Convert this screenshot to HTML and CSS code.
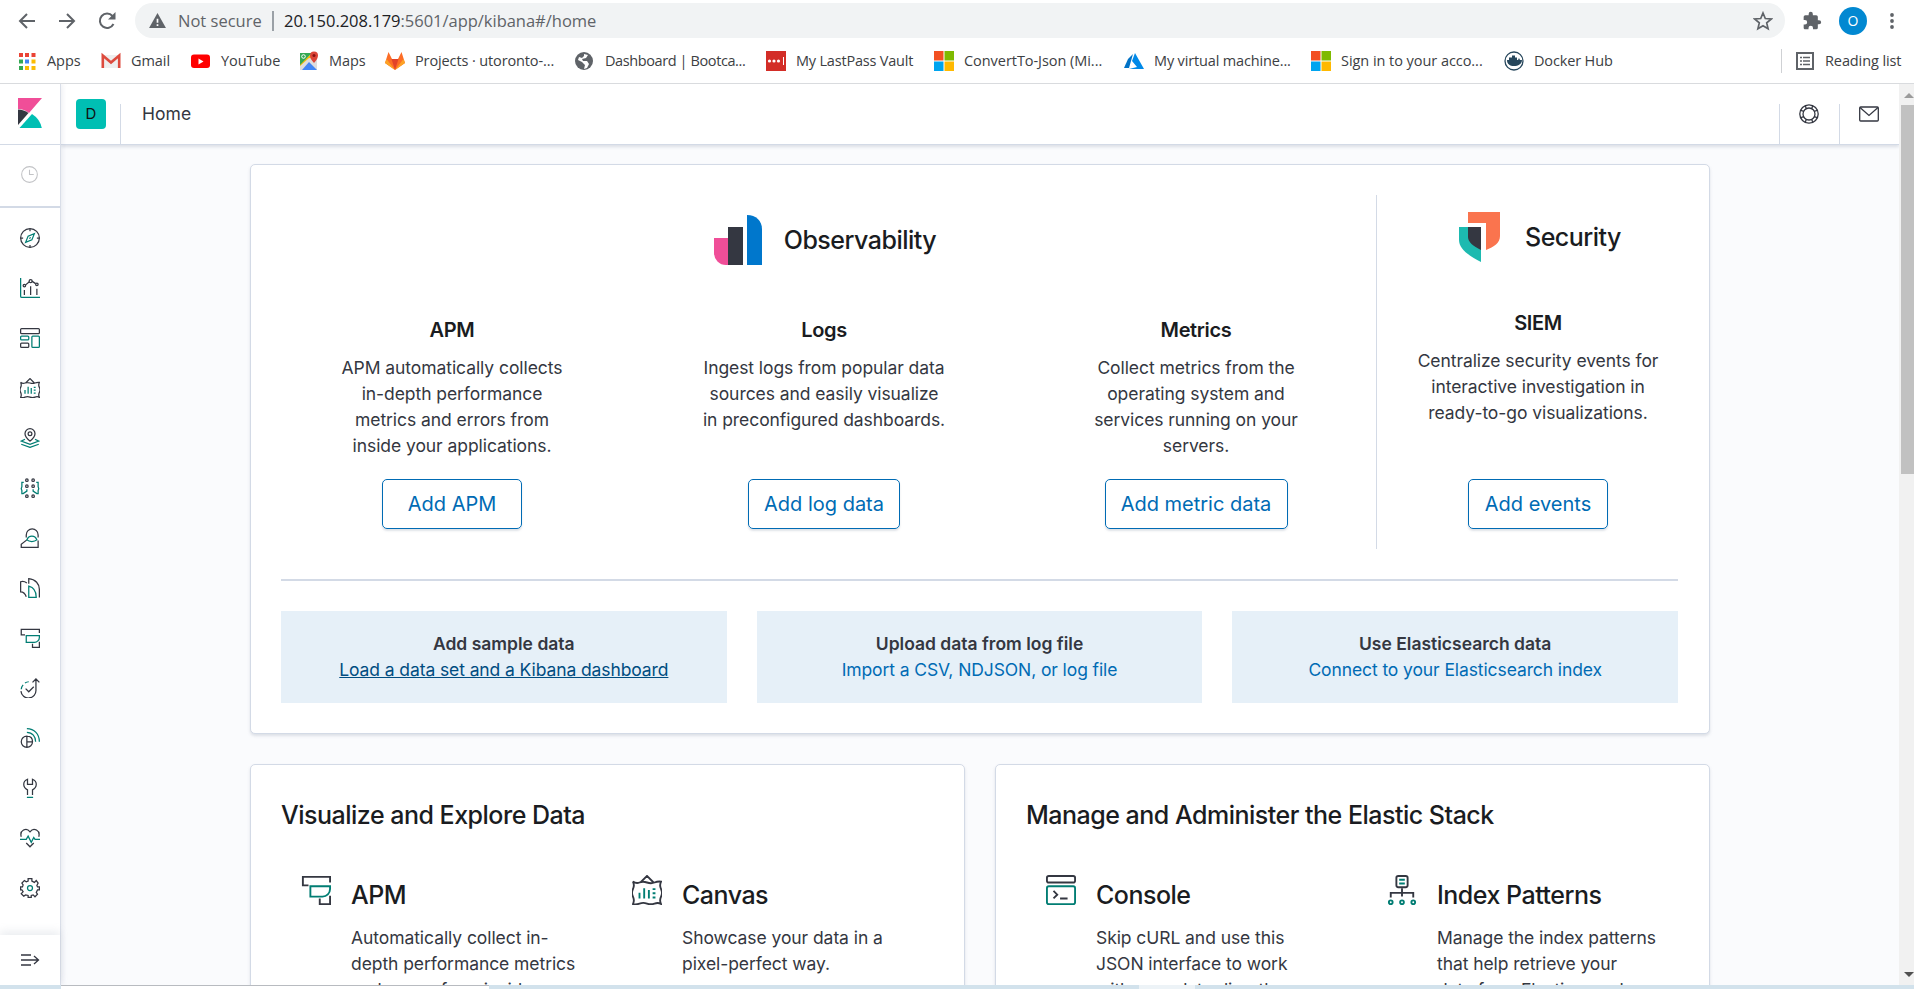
FILE: index.html
```html
<!DOCTYPE html>
<html lang="en">
<head>
<meta charset="utf-8">
<title>Home - Kibana</title>
<link rel="stylesheet" href="styles.css">
</head>
<body>
<svg width="0" height="0" class="defs" aria-hidden="true">
  <symbol id="i-clock" viewBox="0 0 16 16"><g fill="none" stroke="currentColor"><circle cx="8" cy="8" r="7.4"/><path d="M8 3.5V8h4"/></g></symbol>
  <symbol id="i-compass" viewBox="0 0 32 32"><g fill="none" stroke="currentColor" stroke-width="2"><circle cx="16" cy="16" r="15"/><path d="M16 1v4M16 27v4M1 16h4M27 16h4"/><path class="accent" d="M23 9l-4 10-10 4 4-10zM15 17l2-2"/></g></symbol>
  <symbol id="i-visualize" viewBox="0 0 32 32"><g fill="none" stroke="currentColor" stroke-width="2"><path class="accent" d="M1 0v29a2 2 0 0 0 2 2h29"/><path d="M7 19v8M17 13v14M27 17v10M9 11l6-5M19 5l6 4"/><circle cx="7" cy="12" r="2"/><circle cx="17" cy="5" r="2.4"/><circle cx="27" cy="10" r="2"/></g></symbol>
  <symbol id="i-dashboard" viewBox="0 0 32 32"><g fill="none" stroke="currentColor" stroke-width="2"><rect x="1" y="1" width="30" height="8" rx="1.5"/><rect class="accent" x="1" y="13" width="13" height="6" rx="1.5"/><rect x="1" y="24" width="13" height="7" rx="1.5"/><rect class="accent" x="19" y="13" width="12" height="18" rx="1.5"/></g></symbol>
  <symbol id="i-canvas" viewBox="0 0 32 32"><g fill="none" stroke="currentColor" stroke-width="2"><path d="M9 8l7-7 7 7M1 7q3.500 2.500 7 1t8 0 8 0 7-1q-2 4 0 8t0 8 0 8q-3-2-7-.5t-8 0-8 0-7 .5q2-4 0-8t0-8 0-8z"/><path class="accent" d="M8 19v6M13 14v11M18 16v9M22 15h3M22 19.500h3M22 24h3"/></g></symbol>
  <symbol id="i-maps" viewBox="0 0 32 32"><g fill="none" stroke="currentColor" stroke-width="2"><path d="M16 21s-8-7-8-12a8 8 0 0 1 16 0c0 5-8 12-8 12z"/><circle cx="16" cy="9" r="3"/><path class="accent" d="M8 18l-6 3 14 5 14-5-6-3M2 26l14 5 14-5"/></g></symbol>
  <symbol id="i-ml" viewBox="0 0 32 32"><g fill="none" stroke="currentColor" stroke-width="2"><circle cx="11" cy="3.500" r="2"/><circle cx="21" cy="3.500" r="2"/><circle cx="11" cy="13" r="2"/><circle cx="21" cy="13" r="2"/><circle cx="11" cy="29" r="2"/><circle cx="21" cy="29" r="2"/><path class="accent" d="M6 7H3v7l-1 3 1 3v5h2l6-4v-3M26 7h3v7l1 3-1 3v5h-2l-6-4v-3"/></g></symbol>
  <symbol id="i-graph" viewBox="0 0 32 32"><g fill="none" stroke="currentColor" stroke-width="2"><path d="M10 15V11a9.500 9.500 0 0 1 19 0v4M11 19l-9 7v5h27V20"/><path class="accent" d="M11 19c3-8 13-8 16 0-4 3.500-12 3.500-16 0z"/></g></symbol>
  <symbol id="i-metrics" viewBox="0 0 32 32"><g fill="none" stroke="currentColor" stroke-width="2"><path d="M11 8C7 5 4 5 1 6v16c4 0 7 2 9 8M14 9V1c11 1 17 9 17 17v13"/><path class="accent" d="M14 13c8 2 12 9 12 18H14z"/></g></symbol>
  <symbol id="i-apm" viewBox="0 0 32 32"><g fill="none" stroke="currentColor" stroke-width="2"><path d="M8 11H2V2h29v6M20 25v6h11V22"/><path class="accent" d="M10 12h21v3a8 8 0 0 1-8 8H10z"/></g></symbol>
  <symbol id="i-uptime" viewBox="0 0 32 32"><g fill="none" stroke="currentColor" stroke-width="2"><path d="M20 7l5.500-5.500L31 7M25.500 2v17a12 12 0 0 1-24 2M9 17l5 5 8-8"/><path class="accent" d="M2 18a12 12 0 0 1 3-7M8 8a12 12 0 0 1 6-2"/></g></symbol>
  <symbol id="i-siem" viewBox="0 0 32 32"><g fill="none" stroke="currentColor" stroke-width="2"><path d="M11 13a9 9 0 1 0 9 9h-9zM11 13v18M11 13c6 0 9 4 9 9"/><path class="accent" d="M11 1c12 0 20 9 20 21M11 7c9 0 14 7 14 15"/></g></symbol>
  <symbol id="i-wrench" viewBox="0 0 32 32"><g fill="none" stroke="currentColor" stroke-width="2"><path d="M12 27v-8c-8-4-8-14 0-17v8h8V2c8 3 8 13 0 17v8"/><path class="accent" d="M11 31h10"/></g></symbol>
  <symbol id="i-heart" viewBox="0 0 32 32"><g fill="none" stroke="currentColor" stroke-width="2"><path d="M2 14C-1 4 10-2 16 6c6-8 17-2 14 8M10 24l6 6 6-6"/><path class="accent" d="M0 18h10l3-5 5 10 4-8 2 3h8"/></g></symbol>
  <symbol id="i-gear" viewBox="0 0 32 32"><g fill="none" stroke="currentColor" stroke-width="2"><path d="M13 1h6v4l4 2 3-3 3 4-2 4 1 2h3v5h-3l-2 4 2 3-4 4-3-3-3 1v3h-5v-3l-4-1-3 2-4-4 3-3-2-3H1v-5h3l1-3-2-3 4-4 3 2 3-1z"/><circle class="accent" cx="16" cy="16" r="4"/></g></symbol>
  <symbol id="i-console" viewBox="0 0 32 32"><g fill="none" stroke="currentColor" stroke-width="2"><rect x="1" y="1" width="30" height="7" rx="2"/><rect class="accent" x="1" y="12" width="30" height="19" rx="2"/><path d="M8 17l4 4-4 4M15 25h8"/></g></symbol>
  <symbol id="i-index" viewBox="0 0 32 32"><g fill="none" stroke="currentColor" stroke-width="2"><rect x="10" y="1" width="12" height="12" rx="2"/><path d="M16 14v9M4 24v-5h24v5"/><g class="accent"><path d="M13 5h6M13 9h6"/><circle cx="4" cy="29" r="2"/><circle cx="16" cy="29" r="2"/><circle cx="28" cy="29" r="2"/></g></g></symbol>
  <symbol id="i-windows" viewBox="0 0 20 20"><path fill="#f25022" d="M0 0h9.500v9.500H0z"/><path fill="#7fba00" d="M10.500 0H20v9.500h-9.500z"/><path fill="#00a4ef" d="M0 10.500h9.500V20H0z"/><path fill="#ffb900" d="M10.500 10.500H20V20h-9.500z"/></symbol>
</svg>

<header class="browser">
  <div class="toolbar">
    <svg class="tool" viewBox="0 0 20 20"><path d="M18 10H3M10 3l-7 7 7 7"/></svg>
    <svg class="tool" viewBox="0 0 20 20"><path d="M2 10h15M10 3l7 7-7 7"/></svg>
    <svg class="tool" viewBox="0 0 20 20"><path d="M16.500 13A7.200 7.200 0 1 1 15.500 5"/><path class="solid" d="M18.500 1v7.500H11z"/></svg>
    <div class="omnibox">
      <svg class="warn" viewBox="0 0 18 16"><path fill="#5f6368" d="M9 0l9 16H0z"/><path stroke="#fff" stroke-width="1.800" d="M9 6v4.500M9 12v1.800"/></svg>
      <span class="muted">Not secure</span><span class="bar"></span>
      <span class="url"><b>20.150.208.179</b>:5601/app/kibana#/home</span>
      <svg class="star" viewBox="0 0 20 20"><path fill="none" stroke="#5f6368" stroke-width="1.700" d="M10 2l2.300 5.500 6 .5-4.600 3.900 1.400 5.900L10 14.700l-5.100 3.100 1.400-5.900L1.700 8l6-.5z"/></svg>
    </div>
    <svg class="puzzle" viewBox="0 0 24 24"><path fill="#5f6368" d="M20.500 11H19V7a2 2 0 0 0-2-2h-4V3.500a2.500 2.500 0 0 0-5 0V5H4a2 2 0 0 0-2 2v3.800h1.500a2.700 2.700 0 0 1 0 5.400H2V20c0 1.100.9 2 2 2h3.800v-1.500a2.700 2.700 0 0 1 5.400 0V22H17a2 2 0 0 0 2-2v-4h1.500a2.500 2.500 0 0 0 0-5z"/></svg>
    <span class="profile">O</span>
    <svg class="kebab" viewBox="0 0 4 20"><g fill="#5f6368"><circle cx="2" cy="4" r="1.900"/><circle cx="2" cy="10" r="1.900"/><circle cx="2" cy="16" r="1.900"/></g></svg>
  </div>
  <nav class="bookmarks">
    <a class="bm bm-apps"><svg viewBox="0 0 17 17"><path fill="#ea4335" d="M0 0h4v4H0zM6 0h4v4H6zM12.500 0h4v4h-4z"/><path fill="#34a853" d="M0 6.500h4v4H0zM0 13h4v4H0z"/><path fill="#4285f4" d="M6 6.500h4v4H6z"/><path fill="#fbbc04" d="M12.500 6.500h4v4h-4zM6 13h4v4H6zM12.500 13h4v4h-4z"/></svg><span>Apps</span></a>
    <a class="bm bm-gmail"><svg viewBox="0 0 20 20"><path fill="#eee" d="M1 4h18v13H1z"/><path fill="none" stroke="#dd4b3e" stroke-width="2.600" d="M1.800 17V4.500L10 11.500l8.200-7V17"/></svg><span>Gmail</span></a>
    <a class="bm bm-youtube"><svg viewBox="0 0 20 20"><rect x="0" y="3.500" width="19" height="13.500" rx="3" fill="#f00"/><path fill="#fff" d="M7.500 7.500l5 3-5 3z"/></svg><span>YouTube</span></a>
    <a class="bm bm-maps"><svg viewBox="0 0 20 20"><path fill="#34a853" d="M1 2h12L1 15z"/><path fill="#fbbc04" d="M1 14L12 3l3 3L3 19H1z"/><path fill="#ddd" d="M1 15l9-8 8 1v11H1z"/><path fill="#4285f4" d="M10 11l8 8H3z"/><circle cx="4.500" cy="5.500" r="1.800" fill="none" stroke="#fff"/><path fill="#db4437" d="M15 12s-4-4-4-7.500a4 4 0 0 1 8 0C19 8 15 12 15 12z"/><circle cx="15" cy="4.500" r="1.500" fill="#811"/></svg><span>Maps</span></a>
    <a class="bm bm-gitlab"><svg viewBox="0 0 20 20"><path fill="#fc6d26" d="M3.500 1L7 8h6l3.500-7L20 12l-10 7L0 12z"/><path fill="#e24329" d="M6.500 8h7L10 19z"/><path fill="#fca326" d="M1.500 8L0 12l10 7zM18.500 8l1.500 4-10 7z"/></svg><span>Projects · utoronto-...</span></a>
    <a class="bm bm-dash"><svg viewBox="0 0 20 20"><circle cx="9" cy="10" r="9" fill="#5f6368"/><path fill="#fff" d="M9 3l4 1-2 3-4 1 1 2h4l2 3-2 4-3 1 1-4-3-3-4-2 1-3 3 1 2-2z"/></svg><span>Dashboard | Bootca...</span></a>
    <a class="bm bm-lastpass"><svg viewBox="0 0 20 20"><path fill="#d32d27" d="M0 0h20v20H0z"/><g fill="#fff"><circle cx="3.500" cy="10" r="1.600"/><circle cx="8" cy="10" r="1.600"/><circle cx="12.500" cy="10" r="1.600"/><path d="M17 6h1v8h-1z"/></g></svg><span>My LastPass Vault</span></a>
    <a class="bm bm-json"><svg><use href="#i-windows"/></svg><span>ConvertTo-Json (Mi...</span></a>
    <a class="bm bm-azure"><svg viewBox="0 0 20 20"><path fill="#0072c6" d="M9 3L4 8 0 17h5z"/><path fill="#0089e8" d="M11 2l9 16H5l8-2-5-6z"/></svg><span>My virtual machine...</span></a>
    <a class="bm bm-sign"><svg><use href="#i-windows"/></svg><span>Sign in to your acco...</span></a>
    <a class="bm bm-docker"><svg viewBox="0 0 20 20"><circle cx="10" cy="10" r="9" fill="#fff" stroke="#27475c" stroke-width="1.300"/><path fill="#27475c" d="M3 9h11l1-2 1 2h2c0 4-4 6-8 6-4 0-7-2-7-6zM5 6.500h8V9H5zM8 4.500h3v2H8z"/></svg><span>Docker Hub</span></a>
    <a class="bm bm-reading"><svg viewBox="0 0 18 18"><path fill="none" stroke="#5f6368" stroke-width="2" d="M1 1h16v16H1z"/><path stroke="#5f6368" stroke-width="1.600" d="M4 5.500h2M7 5.500h7M4 9h2M7 9h7M4 12.500h2M7 12.500h7"/></svg><span>Reading list</span></a>
  </nav>
</header>

<div class="app">
  <aside class="sidenav">
    <div class="brand"><svg viewBox="0 0 24 30"><path fill="#f04e98" d="M0 0h24L11 15Q6 11 0 11z"/><path fill="#343741" d="M0 11.500q6 0 10.500 3.500L0 27z"/><path fill="#00bfb3" d="M14 16q8 5 9.800 14H1.500z"/></svg></div>
    <div class="recent"><svg><use href="#i-clock"/></svg></div>
    <nav class="links">
      <svg><use href="#i-compass"/></svg><svg><use href="#i-visualize"/></svg><svg><use href="#i-dashboard"/></svg><svg><use href="#i-canvas"/></svg><svg><use href="#i-maps"/></svg><svg><use href="#i-ml"/></svg><svg><use href="#i-graph"/></svg><svg><use href="#i-metrics"/></svg><svg><use href="#i-apm"/></svg><svg><use href="#i-uptime"/></svg><svg><use href="#i-siem"/></svg><svg><use href="#i-wrench"/></svg><svg><use href="#i-heart"/></svg><svg><use href="#i-gear"/></svg>
    </nav>
    <div class="expand"><svg viewBox="0 0 20 20"><path fill="none" stroke="currentColor" stroke-width="1.300" d="M1 5h10M1 10h17M1 15h10M14 6l4.500 4-4.500 4"/></svg></div>
  </aside>

  <div class="column">
    <header class="topbar">
      <div class="space"><span>D</span></div>
      <div class="crumb">Home</div>
      <div class="action"><svg viewBox="0 0 20 20"><g fill="none" stroke="currentColor" stroke-width="1.300"><circle cx="10" cy="10" r="9.200"/><circle cx="10" cy="10" r="6"/><path d="M6.300 1.800l1 3M4.800 7.300l-3-1M13.700 1.800l-1 3M15.200 7.300l3-1M6.300 18.200l1-3M4.800 12.700l-3 1M13.700 18.200l-1-3M15.200 12.700l3 1"/></g></svg></div>
      <div class="action"><svg viewBox="0 0 20 20"><g fill="none" stroke="currentColor" stroke-width="1.300"><rect x=".7" y="3" width="18.600" height="14" rx="1"/><path d="M1 3.500l9 8 9-8"/></g></svg></div>
    </header>
    <main class="page">
      <section class="panel intro">
        <div class="solutions">
          <div class="observability">
            <h2 class="solution"><svg class="logo-obs" viewBox="0 0 48 50"><path fill="#f04e98" d="M0 23h14v27h-2A12 12 0 0 1 0 38z"/><path fill="#343741" d="M14 12h15v38H14z"/><path fill="#0077cc" d="M33 0c9 0 15 6 15 14v36H33z"/></svg>Observability</h2>
            <div class="products">
              <article class="product"><h3>APM</h3><p>APM automatically collects<br>in-depth performance<br>metrics and errors from<br>inside your applications.</p><a class="btn btn-apm">Add APM</a></article>
              <article class="product"><h3>Logs</h3><p>Ingest logs from popular data<br>sources and easily visualize<br>in preconfigured dashboards.</p><a class="btn btn-log">Add log data</a></article>
              <article class="product"><h3>Metrics</h3><p>Collect metrics from the<br>operating system and<br>services running on your<br>servers.</p><a class="btn btn-metric">Add metric data</a></article>
            </div>
          </div>
          <div class="security">
            <h2 class="solution"><svg class="logo-sec" viewBox="0 0 41 50"><path fill="#fa744e" d="M9 0h32v24c0 7-6 11-14 14V11H9z"/><path fill="#1dbab0" d="M0 15h22v35C8 43 0 36 0 28z"/><path fill="#343741" d="M9 15h13v23c-8-4-13-8-13-13z"/></svg>Security</h2>
            <article class="product"><h3>SIEM</h3><p>Centralize security events for<br>interactive investigation in<br>ready-to-go visualizations.</p><a class="btn btn-events">Add events</a></article>
          </div>
        </div>
        <div class="samples">
          <div class="sample"><strong>Add sample data</strong><a class="hovered">Load a data set and a Kibana dashboard</a></div>
          <div class="sample"><strong>Upload data from log file</strong><a>Import a CSV, NDJSON, or log file</a></div>
          <div class="sample"><strong>Use Elasticsearch data</strong><a>Connect to your Elasticsearch index</a></div>
        </div>
      </section>
      <div class="directories">
        <section class="panel directory visualize">
          <h2>Visualize and Explore Data</h2>
          <div class="features">
            <article class="feature"><svg><use href="#i-apm"/></svg><div><h3>APM</h3><p>Automatically collect in-<br>depth performance metrics<br>and errors from inside</p></div></article>
            <article class="feature"><svg><use href="#i-canvas"/></svg><div><h3>Canvas</h3><p>Showcase your data in a<br>pixel-perfect way.</p></div></article>
          </div>
        </section>
        <section class="panel directory manage">
          <h2>Manage and Administer the Elastic Stack</h2>
          <div class="features">
            <article class="feature"><svg><use href="#i-console"/></svg><div><h3>Console</h3><p>Skip cURL and use this<br>JSON interface to work<br>with your data directly.</p></div></article>
            <article class="feature"><svg><use href="#i-index"/></svg><div><h3>Index Patterns</h3><p>Manage the index patterns<br>that help retrieve your<br>data from Elasticsearch.</p></div></article>
          </div>
        </section>
      </div>
    </main>
  </div>
  <div class="scrollbar"><i class="up"></i><i class="thumb"></i><i class="down"></i></div>
</div>
<footer class="edge"><i class="edge-tab"></i><i class="edge-light"></i></footer>
</body>
</html>
```
FILE: styles.css
```css
* { box-sizing: border-box; }
body { margin: 0; width: 1914px; height: 989px; overflow: hidden; display: flex; flex-direction: column; background: #fff; color: #343741; font: 17.5px/26px Inter, sans-serif; letter-spacing: -.07px; }
h2, h3, p { margin: 0; }
svg { display: block; flex: none; }
.defs { position: absolute; }
.accent { stroke: #017d73; }

.browser { height: 84px; flex: none; border-bottom: 1px solid #d9dbde; font-family: "Open Sans", sans-serif; color: #3c4043; letter-spacing: 0; }
.toolbar { height: 41px; display: flex; align-items: center; padding-left: 17px; }
.tool { width: 20px; height: 20px; margin-right: 20px; fill: none; stroke: #5f6368; stroke-width: 2; }
.tool .solid { fill: #5f6368; stroke: none; }
.omnibox { width: 1650px; height: 35px; margin-left: -2px; border-radius: 18px; background: #f1f3f4; display: flex; align-items: center; font-size: 16.500px; color: #5f6368; }
.warn { width: 17px; height: 15px; margin-left: 14px; }
.muted { width: 84px; margin-left: 12px; white-space: nowrap; }
.bar { width: 2px; height: 20px; margin: 0 10px 0 10px; background: #9aa0a6; }
.url { letter-spacing: -.02px; }
.url b { color: #202124; font-weight: 400; }
.star { width: 20px; height: 20px; margin: 0 12px 0 auto; }
.puzzle { width: 20px; height: 20px; margin-left: 17px; }
.profile { width: 28px; height: 28px; margin-left: 17px; border-radius: 50%; background: #0288d1; color: #fff; font-size: 14px; line-height: 28px; text-align: center; }
.kebab { width: 4px; height: 20px; margin-left: 23px; }
.bookmarks { height: 40px; display: flex; align-items: center; font-size: 14.500px; letter-spacing: -.05px; padding-left: 19px; white-space: nowrap; }
.bm { display: flex; align-items: center; }
.bm svg { width: 20px; height: 20px; margin-right: 10px; }
.bm-apps { width: 82px; } .bm-apps svg { width: 17px; height: 17px; margin-right: 11px; }
.bm-gmail { width: 90px; } .bm-youtube { width: 108px; } .bm-maps { width: 86px; }
.bm-gitlab { width: 190px; letter-spacing: -.12px; } .bm-dash { width: 191px; letter-spacing: -.4px; } .bm-lastpass { width: 168px; letter-spacing: -.2px; }
.bm-json { width: 190px; } .bm-azure { width: 187px; letter-spacing: -.15px; } .bm-sign { width: 193px; } .bm-docker { width: 277px; letter-spacing: -.15px; }
.bm-reading { height: 24px; border-left: 1px solid #cfd1d4; padding-left: 14px; letter-spacing: -.1px; }
.bm-reading svg { width: 18px; height: 18px; margin-right: 11px; }

.app { height: 901px; flex: none; display: flex; overflow: hidden; }
.sidenav { position: relative; z-index: 2; width: 61px; flex: none; display: flex; flex-direction: column; background: #fff; border-right: 1px solid #d9dee8; box-shadow: 2px 0 4px rgba(152,162,179,.15); }
.brand { height: 61px; flex: none; padding: 14px 0 0 18px; border-bottom: 1px solid #d3dae6; }
.brand svg { width: 24px; height: 30px; }
.recent { height: 63px; flex: none; padding: 21px; border-bottom: 2px solid #d3dae6; color: #c2c3c6; }
.recent svg { width: 17px; height: 17px; }
.links svg, .expand svg { width: 20px; height: 20px; }
.links { flex: 1; display: flex; flex-direction: column; align-items: center; gap: 30px; padding-top: 20px; }
.expand { height: 50px; flex: none; display: flex; align-items: center; justify-content: center; box-shadow: 0 -4px 8px rgba(152,162,179,.18); }

.column { flex: 1; display: flex; flex-direction: column; background: #fafbfd; }
.topbar { height: 61px; flex: none; display: flex; background: #fff; border-bottom: 1px solid #d3dae6; box-shadow: 0 2px 3px rgba(152,162,179,.3); }
.space { width: 60px; padding: 15px; background: linear-gradient(#d3dae6,#d3dae6) right bottom/1px 40px no-repeat; }
.space span { display: block; width: 30px; height: 30px; border-radius: 4px; background: #00bfb3; color: #111; font-size: 15px; line-height: 30px; text-align: center; }
.crumb { flex: 1; padding: 17px 20px 0 21px; letter-spacing: .05px; }
.action { width: 60px; padding: 20px 0 0 20px; background: linear-gradient(#d3dae6,#d3dae6) left bottom/1px 40px no-repeat; }
.action svg { width: 20px; height: 20px; }

.page { flex: 1; min-height: 0; width: 1460px; margin-left: 189px; padding-top: 19px; }
.panel { background: #fff; border: 1px solid #d3dae6; border-radius: 5px; box-shadow: 0 2px 3px rgba(152,162,179,.3); }
.intro { height: 570px; padding: 30px 31px 30px 30px; }
.solutions { height: 386px; display: flex; align-items: flex-start; border-bottom: 2px solid #d3dae6; }
.observability { width: 1096px; height: 354px; border-right: 1px solid #d3dae6; }
.security { flex: 1; padding-left: 21px; }
.solution { display: flex; align-items: center; justify-content: center; color: #1a1c21; font-size: 25px; line-height: 31px; font-weight: 450; letter-spacing: -.5px; }
.observability .solution { padding: 20px 7px 0 0; }
.security .solution { padding: 17px 0 0 4px; }
.logo-obs { width: 48px; height: 50px; margin-right: 22px; }
.logo-sec { width: 41px; height: 50px; margin-right: 25px; }
.products { display: flex; margin-left: -15px; width: 1116px; }
.product { flex: 1; display: flex; flex-direction: column; align-items: center; text-align: center; padding-top: 53px; height: 264px; }
.security .product { padding-top: 49px; height: 267px; }
.product h3 { color: #1a1c21; font-size: 20px; line-height: 25px; font-weight: 600; margin-bottom: 12px; letter-spacing: -.35px; }
.btn { margin-top: auto; height: 50px; flex: none; border: 1px solid #006bb4; border-radius: 5px; color: #006bb4; font-size: 20px; line-height: 48px; letter-spacing: 0; box-shadow: 0 2px 2px rgba(152,162,179,.3); }
.btn-apm, .btn-events { width: 140px; } .btn-log { width: 152px; } .btn-metric { width: 183px; }
.samples { display: flex; gap: 30px; padding-top: 30px; }
.sample { flex: 1; height: 92px; padding-top: 20px; display: flex; flex-direction: column; align-items: center; background: #e6f0f8; }
.sample strong { font-weight: 600; letter-spacing: 0; }
.sample a { color: #006bb4; letter-spacing: -.1px; }
.sample .hovered { color: #004d81; text-decoration: underline; }

.directories { display: flex; gap: 30px; margin-top: 30px; }
.directory { width: 715px; height: 500px; padding: 35px 30px 0; }
.directory h2, .feature h3 { color: #1a1c21; font-size: 25px; line-height: 31px; font-weight: 450; letter-spacing: -.5px; }
.features { display: flex; margin: 44px 0 0 20px; }
.feature { display: flex; }
.feature svg { width: 30px; height: 30px; margin-right: 20px; }
.feature h3 { padding-top: 5px; margin-bottom: 14px; }
.feature p { white-space: nowrap; }
.visualize .feature { width: 331px; flex: none; }
.manage .feature { width: 341px; flex: none; }

.scrollbar { position: relative; width: 15px; background: #f1f1f1; flex: none; }
.thumb { position: absolute; left: 2px; right: 0; top: 21px; height: 369px; background: #c1c1c1; }
.up, .down { position: absolute; left: 5px; border: 5px solid transparent; }
.up { top: 4px; border-bottom-color: #9b9b9b; }
.down { bottom: 3px; border-top-color: #505050; }
.edge { position: relative; z-index: 3; height: 4px; background: #d2e2ec; display: flex; }
.edge-tab { width: 428px; margin-left: 61px; background: #fff; border-top: 1px solid #b8bbc0; }
.edge-light { width: 56px; margin-left: 650px; background: #edf3f7; }
```
